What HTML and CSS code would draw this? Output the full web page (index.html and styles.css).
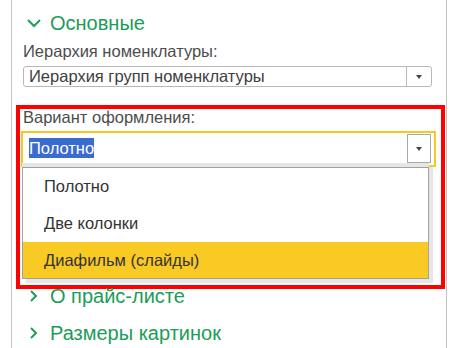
FILE: index.html
```html
<!DOCTYPE html>
<html lang="ru">

<head>
    <meta charset="UTF-8">
    <title>Настройки прайс-листа</title>
    <link rel="stylesheet" href="styles.css">
</head>

<body>
    <div class="panel">
        <div class="group-title open">
            <svg class="chevron" width="16" height="10" viewBox="0 0 16 10">
                <path d="M2 2 L8 8 L14 2" fill="none" stroke="#1f9d5c" stroke-width="2"/>
            </svg>
            <span>Основные</span>
        </div>

        <div class="label">Иерархия номенклатуры:</div>
        <div class="field">
            <div class="field-text">Иерархия групп номенклатуры</div>
            <div class="field-btn"><span class="arrow"></span></div>
        </div>

        <div class="highlight">
            <div class="label inner-label">Вариант оформления:</div>
            <div class="field focused">
                <div class="field-text"><span class="selected">Полотно</span></div>
                <div class="field-btn square"><span class="arrow"></span></div>
            </div>
            <div class="dropdown">
                <div class="item">Полотно</div>
                <div class="item">Две колонки</div>
                <div class="item current">Диафильм (слайды)</div>
            </div>
        </div>

        <div class="group-title closed first-closed">
            <svg class="chevron" width="16" height="14" viewBox="0 0 16 14">
                <path d="M5 2 L10 7 L5 12" fill="none" stroke="#1f9d5c" stroke-width="2"/>
            </svg>
            <span>О прайс-листе</span>
        </div>
        <div class="group-title closed">
            <svg class="chevron" width="16" height="14" viewBox="0 0 16 14">
                <path d="M5 2 L10 7 L5 12" fill="none" stroke="#1f9d5c" stroke-width="2"/>
            </svg>
            <span>Размеры картинок</span>
        </div>
    </div>
</body>

</html>
```

FILE: styles.css
```css
body {
    margin: 0;
    font-family: "Liberation Sans", Arial, sans-serif;
    background: white;
    overflow: hidden;
}

.panel {
    margin-left: 11px;
    width: 434px;
    height: 348px;
    border-left: 1px solid #c4c4c4;
    border-right: 1px solid #c4c4c4;
}

.group-title {
    display: flex;
    align-items: center;
    height: 20px;
    font-size: 20px;
    line-height: 20px;
    color: #1c9c58;
}

.group-title.open {
    padding-top: 13px;
}

.chevron {
    margin-left: 14px;
    margin-right: 8px;
}

.group-title.closed {
    margin-top: 17px;
}

.group-title.first-closed {
    margin-top: -3px;
}

.label {
    font-size: 16.5px;
    line-height: 16px;
    color: #4d4d4d;
    margin: 10px 0 0 11px;
}

.field {
    display: flex;
    align-items: center;
    box-sizing: border-box;
    margin: 7px 0 0 11px;
    width: 409px;
    height: 21px;
    border: 1px solid #b8b8b8;
    border-radius: 3px;
}

.field-text {
    flex: 1;
    padding-left: 5px;
    font-size: 16.5px;
    color: #404040;
    white-space: nowrap;
}

.field-btn {
    display: flex;
    align-items: center;
    justify-content: center;
    width: 24px;
    height: 100%;
    border-left: 1px solid #b8b8b8;
}

.arrow {
    width: 0;
    height: 0;
    border-left: 3.5px solid transparent;
    border-right: 3.5px solid transparent;
    border-top: 4px solid #444;
}

.highlight {
    margin: 18px 0 0 4px;
    width: 429px;
    height: 184px;
    box-sizing: border-box;
    border: 4px solid #ff0000;
}

.inner-label {
    margin: 0 0 0 3px;
}

.field.focused {
    margin: 6px 0 0 1px;
    width: 415px;
    height: 36px;
    border: 2px solid #f7c824;
    border-radius: 0;
    align-items: flex-start;
}

.field.focused .field-text {
    padding: 5px 0 0 6px;
}

.selected {
    background: #3a6cd0;
    color: white;
    font-size: 16.5px;
    line-height: 20px;
    display: inline-block;
}

.field-btn.square {
    box-sizing: border-box;
    width: 24px;
    height: 29px;
    margin: 1px 3px 0 0;
    border: 1px solid #a8a8a8;
}

.dropdown {
    position: relative;
    margin-left: 2px;
    width: 407px;
    box-sizing: border-box;
    border: 1px solid #a0a0a0;
    box-shadow: 0 -4px 0 #e6e6e6, 4px 4px 0 #e6e6e6, 4px 0 0 #e6e6e6;
    background: white;
}

.item {
    height: 37px;
    line-height: 37px;
    padding-left: 21px;
    font-size: 16.5px;
    color: #333;
}

.item.current {
    background: #f9ca24;
    height: 36px;
    line-height: 36px;
}
```
